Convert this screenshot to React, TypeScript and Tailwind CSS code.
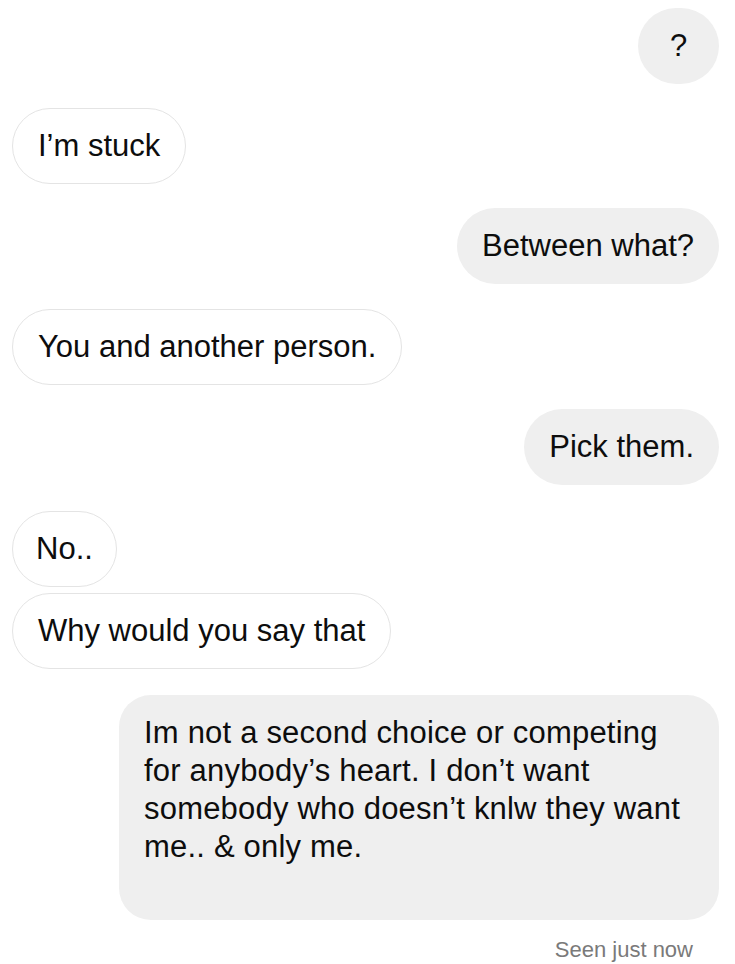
import React from "react";

const font = { fontFamily: '"Liberation Sans", Arial, sans-serif' };

function Left({ children, mt, px = "px-[25px]" }: { children: React.ReactNode; mt: string; px?: string }) {
  return (
    <div
      className={`self-start h-[76px] flex items-center ${px} rounded-full border-[1.5px] border-[#e4e4e4] bg-white text-[31px] leading-[38px] text-[#0d0d0d] whitespace-nowrap ${mt}`}
    >
      {children}
    </div>
  );
}

function Right({ children, mt }: { children: React.ReactNode; mt: string }) {
  return (
    <div
      className={`self-end h-[76px] flex items-center px-[25px] rounded-full bg-[#efefef] text-[31px] leading-[38px] text-[#0d0d0d] whitespace-nowrap ${mt}`}
    >
      {children}
    </div>
  );
}

export default function App() {
  return (
    <div
      className="w-[735px] h-[964px] bg-white flex flex-col pl-[12px] pr-[16px] pt-[8px] overflow-hidden"
      style={font}
    >
      <div className="self-end w-[81px] h-[76px] rounded-full bg-[#efefef] flex items-center justify-center text-[31px] text-[#0d0d0d]">
        ?
      </div>
      <Left mt="mt-[24px]">I’m stuck</Left>
      <Right mt="mt-[24px]">Between what?</Right>
      <Left mt="mt-[25px]">You and another person.</Left>
      <Right mt="mt-[24px]">Pick them.</Right>
      <Left mt="mt-[26px]" px="px-[23px]">No..</Left>
      <Left mt="mt-[6px]">Why would you say that</Left>
      <div className="self-end mt-[26px] w-[600px] h-[225px] rounded-[32px] bg-[#efefef] pl-[25px] pt-[19px] text-[31px] leading-[38px] tracking-[0.2px] text-[#0d0d0d] whitespace-nowrap">
        Im not a second choice or competing
        <br />
        for anybody’s heart. I don’t want
        <br />
        somebody who doesn’t knlw they want
        <br />
        me.. &amp; only me.
      </div>
      <div className="self-end mr-[26px] mt-[16px] text-[22px] leading-[28px] text-[#7a7a7a]">
        Seen just now
      </div>
    </div>
  );
}
